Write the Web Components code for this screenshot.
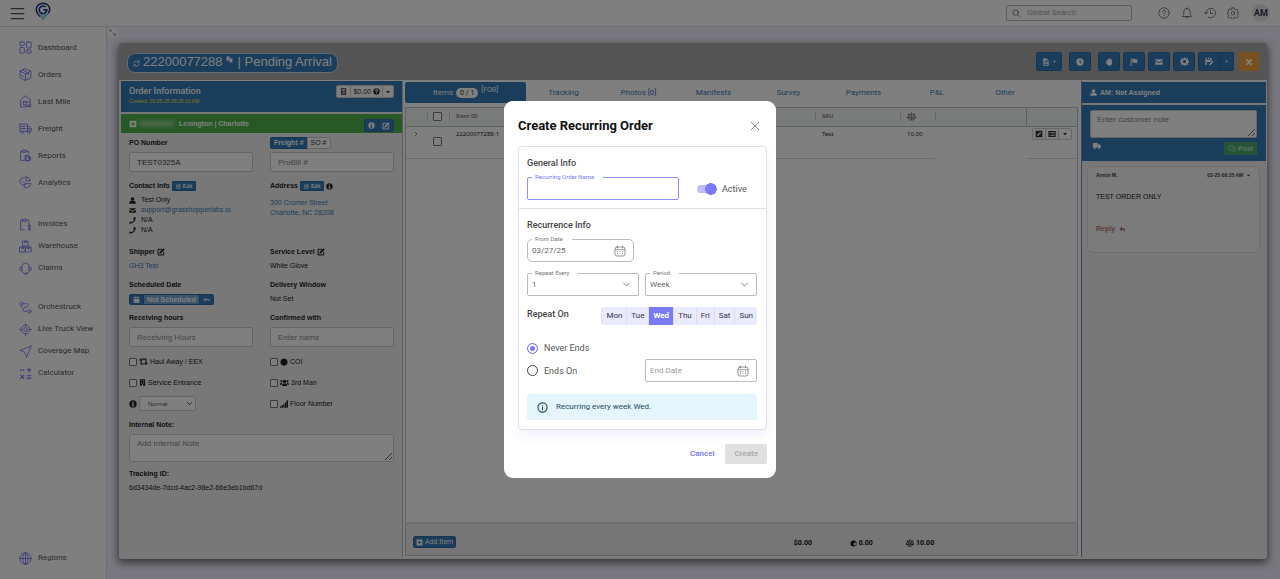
<!DOCTYPE html>
<html lang="en">
<head>
<meta charset="utf-8">
<meta name="viewport" content="width=device-width, initial-scale=1">
<title>Create Recurring Order</title>
<style>
  html, body { height: 100%; margin: 0; }
  body { font: 8px/12px Roboto, "Liberation Sans", sans-serif; color: #333; }
</style>
</head>
<body>
<order-app></order-app>

<script>
const SANS = '"Liberation Sans", Arial, sans-serif';

// Shared rules, every shadow root gets its own copy
const BASE = `
  *, *::before, *::after { box-sizing: border-box; }
  button, input, select, textarea { font: inherit; color: inherit; margin: 0; }
  button { cursor: pointer; }
  a { color: #337ab7; text-decoration: none; }
`;

const BTN = `
  .btn { display: inline-flex; align-items: center; justify-content: center; gap: 2px; padding: 0 3px;
    background: #337ab7; color: #fff; border: 1px solid #2e6da4; border-radius: 2px; line-height: 10px; }
  .btn.light { background: #fff; color: #333; border-color: #ccc; }
  .group { display: inline-flex; }
  .group .btn { border-radius: 0; }
  .group .btn + .btn { border-left-width: 1px; margin-left: -1px; }
  .group .btn:first-child { border-radius: 2px 0 0 2px; }
  .group .btn:last-child { border-radius: 0 2px 2px 0; }
`;

const s = (d, w = 1.5) => `<g fill="none" stroke="currentColor" stroke-width="${w}" stroke-linecap="round" stroke-linejoin="round">${d}</g>`;
const f = (d) => `<g fill="currentColor" fill-rule="evenodd">${d}</g>`;

const ICONS = {
  menu: s('<path d="M2 4h20M2 12h20M2 20h20"/>', 2),
  logo: `<path fill="none" stroke="#1d2f6f" stroke-width="2" d="M8 19.500C5 16 3 13.500 3 10a9 8.500 0 0 1 18 0c0 2-1 3.500-2 5"/>
    <path fill="none" stroke="#1d3f8f" stroke-width="2.200" d="M15.500 6.800A5 5 0 1 0 17 10.500h-4.500"/>
    <path fill="none" stroke="#2bb5c9" stroke-width="1.800" stroke-dasharray="2 1.200" d="M7 17l5 6 7-8M9.500 16.500l2.500 3 4-4"/>`,
  search: s('<circle cx="11" cy="11" r="8"/><path d="M17 17l5 5"/>', 2),
  help: s('<circle cx="12" cy="12" r="10.500"/><path d="M9 9.500c0-4 6-4 6-.500 0 2.500-3 2.500-3 5M12 17.500v.300"/>'),
  bell: s('<path d="M3 19h18l-2.500-4V9.500a6.500 6.500 0 0 0-13 0V15zM9.500 19.500a2.500 2.500 0 0 0 5 0M12 3V1.500"/>'),
  history: s('<path d="M4 13A9.500 9.500 0 1 1 9 20.500M1 11l3 3 3.500-3M13 7v6h4.500"/>'),
  gear: s('<path d="M10 1.500h4l.6 3 2.400 1 2.500-1.700 2.800 2.800-1.700 2.500 1 2.300 1.900.6v2l-2 .6-.9 2.400 1.700 2.500-2.800 2.800-2.500-1.700-2.400 1-.6 2.900h-4l-.6-2.900-2.400-1-2.500 1.700-2.800-2.800 1.700-2.500-1-2.400-1.900-.6v-2l1.900-.6 1-2.300-1.700-2.500 2.800-2.800 2.500 1.700 2.400-1z"/><circle cx="12" cy="12.500" r="3.500"/>'),
  dashboard: s('<rect x="1.500" y="2" width="8.500" height="6.500" rx="2"/><rect x="1.500" y="12" width="8.500" height="10.500" rx="2"/><rect x="14" y="2" width="8.500" height="11" rx="2"/><rect x="14" y="16.500" width="8.500" height="6" rx="2"/>'),
  box: s('<path d="M12 1.500l10 4.500v12l-10 5-10-5V6zM2 6l10 5 10-5M12 11v12M7 3.800l10 5v4M5 14l3 1.500"/>'),
  house: s('<path d="M12 22H3V9l9-7.500L21 9v3M8 12h6v2M8 12v6h4M15 13h5l2 5h-2M13 15v6h3M20 21h2"/><circle cx="18" cy="20" r="2.200"/>'),
  truck: s('<path d="M1.500 4h14v13H9M1.500 4v13h1.500M15.500 8h4l3 4.500V17h-2M15.500 12.500h7M4 8h8M4 12h8"/><circle cx="6" cy="18.500" r="2.500"/><circle cx="18" cy="18.500" r="2.500"/>'),
  report: s('<path d="M9.500 21H3V4h4M13 4h5v5M7 2h6v4H7z"/><path d="M12 12h5l3 3v7h-8z"/><circle cx="17" cy="17" r="4.500"/><path d="M17 15v2h2"/>'),
  analytics: s('<path d="M10 3a7 7 0 1 0 2 13M13 2v7h8a8 8 0 0 0-8-7M12.500 14H22a8 8 0 0 1-13 6l3.500-6L7 10"/>'),
  invoice: s('<path d="M10 22H3V4h4M13 4h5v6M7 2h6v4H7zM22 14c-1.500-1.500-6-1.500-6 1.200 0 2.600 6 1.400 6 4 0 2.800-4.500 2.800-6 1.200M19 11.500v11.500"/>'),
  warehouse: s('<path d="M7 2h10v9H7zM10.500 2v3h3V2M1.500 13h10v9h-10zM5 13v3h3v-3M12.500 13h10v9h-10zM16 13v3h3v-3"/>'),
  claims: s('<path d="M5 9.500a7 7.500 0 0 1 14 0M5 9.500h-2a1.500 1.500 0 0 0-1.500 1.500v4H5zM19 9.500h2a1.500 1.500 0 0 1 1.500 1.500v4H19zM5 15c0 4 3 6 6 6.500M19 15c0 3-1.500 5-4 6"/><circle cx="13" cy="21.500" r="1.500"/>'),
  route: s('<circle cx="4.500" cy="5" r="3"/><circle cx="19.500" cy="19.500" r="3"/><path d="M9 5h5c4 0 4 5 0 6l-4 1c-4 1-4 7 0 7h4M4.500 8v3"/>'),
  target: s('<circle cx="12" cy="12" r="8"/><circle cx="12" cy="12" r="3.500"/><path d="M12 1v3M12 20v3M1 12h3M20 12h3"/>'),
  nav: s('<path d="M22 2L2 10l8.500 3.500L14 22z"/>'),
  calc: s('<path d="M2 5.500h7M15 5.500h7M18.500 2v7M3 15l6 6M9 15l-6 6M15 16h7M15 20.500h7"/>', 2),
  globe: s('<circle cx="12" cy="12" r="10.500"/><ellipse cx="12" cy="12" rx="5" ry="10.500"/><path d="M1.500 12h21M12 1.500v21"/>'),
  expand: s('<path d="M14 14l7 7M16 21h5v-5M10 10L3 3M3 8V3h5"/>', 2),
  refresh: s('<path d="M3 10a9 9 0 0 1 17-2M21 2v6h-6M21 14a9 9 0 0 1-17 2M3 22v-6h6"/>', 2.5),
  copy: f('<path d="M2 2h12v4h-4v10H2zM12 8h10v14H12z"/>'),
  file: f('<path d="M4 1h9v7h7v15H4zM15 1l5 5h-5zM7 12h10v-2H7zm0 4h10v-2H7zm0 4h10v-2H7z"/>'),
  clock: f('<path d="M12 1a11 11 0 1 0 0 22 11 11 0 0 0 0-22zM10.500 5h3v6.500l4 3-2 2.500-5-4z"/>'),
  hand: f('<path d="M5 11V6.500c0-2 3-2 3 0V4c0-2 3-2 3.500 0V2.500c0-2 3-2 3.500 0V4c.5-2 3-2 3 0v2c.5-2 3-1.500 3 .5V15c0 5-3 8-7.500 8-4 0-6-2-8-5L2 13c-1-2.500 1.500-3.500 3-2z"/>'),
  flag: f('<path d="M2 1h3v22H2zM7 3c5-3 8 3 15 0v11c-6 3-9-3-15 0z"/>'),
  mail: f('<path d="M1 4h22v2l-11 7L1 6zM1 9l11 7 11-7v11H1z"/>'),
  cog: f('<path d="M10 1h4l.7 3 2 .8L19.400 3 22 5.500l-1.600 2.700.8 2 2.800.7v3.500l-3 .7-.8 2 1.600 2.700-2.600 2.500-2.600-1.600-2 .8L14 23.500h-4l-.7-3-2-.8-2.700 1.600L2 18.800l1.600-2.700-.8-2-2.800-.7V10l3-.7.800-2L2 5.500 4.600 3l2.700 1.600 2-.8zM12 7.500a4.500 4.500 0 1 0 0 9 4.500 4.500 0 0 0 0-9z"/>'),
  save: f('<path d="M1 2h4v6h8V2h2l3 3v3l-5 5H5v8H1zM8 2h3v4H8zM20 9l3 3-8 9-4 1 1-4z"/>'),
  close: s('<path d="M6 6l12 12M18 6L6 18"/>', 6),
  x: s('<path d="M3 3l18 18M21 3L3 21"/>', 2),
  caret: f('<path d="M4 8h16l-8 9z"/>'),
  calculator: f('<path d="M3 1h18v22H3zM6 4v5h12V4zM6 12v3h3v-3zm4.500 0v3h3v-3zM15 12v8h3v-8zM6 17v3h3v-3zm4.500 0v3h3v-3z"/>'),
  question: f('<path d="M12 1a11 11 0 1 0 0 22 11 11 0 0 0 0-22zM7 9c0-6 10-6 10 0 0 3-3.500 3-3.500 5.500h-3c0-4 3.500-4 3.500-5.500 0-2-4-2-4 .500zM10.500 16.500h3v3h-3z"/>'),
  info: f('<path d="M12 1a11 11 0 1 0 0 22 11 11 0 0 0 0-22zM10 4.500h4v3.500h-4zM9 10h5v7h1.500v2.500h-7V17H10v-4.500H9z"/>'),
  plus: f('<path d="M2 2h20v20H2zM10.500 6v4.500H6v3h4.500V18h3v-4.500H18v-3h-4.500V6z"/>'),
  edit: s('<path d="M13 4H3v17h17v-8"/>', 3) + f('<path d="M19 1l4 4-11 11-5 1 1-5z"/>'),
  user: f('<circle cx="12" cy="7" r="6"/><path d="M1 23v-4c0-4 4-6 11-6s11 2 11 6v4z"/>'),
  phone: f('<path d="M17 1l6 1c0 12-9 21-21 21l-1-6 5-2 2.500 3c4-2 7-5 9-9L14 6z"/>'),
  calendar: f('<path d="M2 4h4V1h3v3h6V1h3v3h4v4H2zM2 10h20v13H2z"/>'),
  key: s('<circle cx="7" cy="12" r="4"/><path d="M11 12h11v4M17 12v3"/>', 2.5),
  retweet: f('<path d="M0 9l5-6 5 6H7v8h7l3 3H4V9zM24 15l-5 6-5-6h3V7h-7L7 4h13v11z"/>'),
  badge: f('<path d="M12 1l3 2 4 0 1 4 3 2-1 3 1 4-3 2-1 4-4 0-3 2-3-2-4 0-1-4-3-2 1-4-1-3 3-2 1-4 4 0z"/>'),
  building: f('<path d="M3 1h18v22h-7v-5h-4v5H3zM7 4v3h3V4zm7 0v3h3V4zM7 9v3h3V9zm7 0v3h3V9zM7 14v2h3v-2zm7 0v2h3v-2z"/>'),
  users: f('<circle cx="12" cy="9" r="4.500"/><circle cx="4" cy="8" r="3"/><circle cx="20" cy="8" r="3"/><path d="M5 21c0-9 14-9 14 0zM0 18c0-5 3-7 6-6l-2 6zM24 18c0-5-3-7-6-6l2 6z"/>'),
  signal: f('<path d="M0 19h4v4H0zM5 16h4v7H5zM10 12h4v11h-4zM15 7h4v16h-4zM20 1h4v22h-4z"/>'),
  chevronRight: s('<path d="M8 4l8 8-8 8"/>', 2),
  chevronDown: s('<path d="M4 8l8 8 8-8"/>', 2.5),
  scale: s('<path d="M12 2v19M6 21h12M3 6h18M1 15l4-9 4 9zM15 15l4-9 4 9zM1 15c1 3 7 3 8 0M15 15c1 3 7 3 8 0"/>', 2),
  cube: f('<path d="M12 1l10 5v12l-10 5-10-5V6zM13 11v9l7-4V8z"/>'),
  pencilBox: f('<path d="M2 2h20v20H2zM16 6l2 2-8 9-4 1 1-4z"/>'),
  list: f('<path d="M1 3h22v18H1zM4 7v2h3V7zm5 0v2h11V7zm-5 4v2h3v-2zm5 0v2h11v-2zm-5 4v2h3v-2zm5 0v2h11v-2z"/>'),
  van: f('<path d="M0 3h14v14H0zM15 7h5l4 5v5h-9z"/><circle cx="6" cy="19" r="2.500"/><circle cx="18" cy="19" r="2.500"/>'),
  chat: s('<path d="M2 3h14v9H8l-4 4v-4H2zM19 8h3v10h-2v3l-4-3h-6"/>', 2),
  reply: f('<path d="M10 2v5c9 0 13 4 10 15-1-6-4-8-10-8v5L1 10.500z"/>'),
  date: s('<rect x="2" y="4" width="20" height="18" rx="4"/><path d="M2 9.500h20M7 2v4M17 2v4"/>', 1.5) +
    s('<path d="M7 13.500h.1M12 13.500h.1M17 13.500h.1M7 17.500h.1M12 17.500h.1M17 17.500h.1"/>', 2),
  infoOutline: s('<circle cx="12" cy="12" r="10"/><path d="M12 11v6M12 7v.2"/>', 2.5)
};

// Square icon, e.g. <ui-icon name="bell" size="12">
class UiIcon extends HTMLElement {
  constructor() {
    super();
    this.attachShadow({ mode: 'open' });
  }

  connectedCallback() {
    const size = this.getAttribute('size') || 8;
    this.shadowRoot.innerHTML = `
      <style>
        :host { display: inline-block; flex: none; width: ${size}px; height: ${size}px; vertical-align: middle; }
        svg { display: block; width: 100%; height: 100%; }
      </style>
      <svg viewBox="0 0 24 24" aria-hidden="true">${ICONS[this.getAttribute('name')] || ''}</svg>
    `;
  }
}
customElements.define('ui-icon', UiIcon);

class AppTopbar extends HTMLElement {
  constructor() {
    super();
    this.attachShadow({ mode: 'open' });
    this.shadowRoot.innerHTML = `
      <style>
        ${BASE}
        :host { display: flex; align-items: center; height: 27px; padding: 0 10px; background: #fff;
          border-bottom: 1px solid #dcdae6; color: #555; }
        button { display: flex; padding: 0; border: 0; background: none; }
        .logo { display: flex; margin: -5px auto 0 9px; }
        .search { display: flex; align-items: center; gap: 7px; width: 126px; height: 16px; padding: 0 5px;
          border: 1px solid #b9b9b9; border-radius: 2px; }
        .search input { flex: 1; min-width: 0; height: 12px; padding: 0; border: 0; outline: 0; background: none; }
        .search input::placeholder { color: #aaa; }
        .actions { display: flex; align-items: center; gap: 11px; margin: 0 13px 0 26px; }
        .avatar { width: 18px; height: 18px; align-items: center; justify-content: center; border-radius: 50%;
          background: #e7e7ec; color: #222240; font-size: 9px; font-weight: 500; }
      </style>
      <button aria-label="Menu"><ui-icon name="menu" size="15"></ui-icon></button>
      <a class="logo" href="#" aria-label="Home"><ui-icon name="logo" size="18"></ui-icon></a>
      <label class="search">
        <ui-icon name="search" size="8"></ui-icon>
        <input type="text" placeholder="Global Search" aria-label="Global Search">
      </label>
      <div class="actions">
        <button aria-label="Help"><ui-icon name="help" size="12"></ui-icon></button>
        <button aria-label="Notifications"><ui-icon name="bell" size="12"></ui-icon></button>
        <button aria-label="History"><ui-icon name="history" size="12"></ui-icon></button>
        <button aria-label="Settings"><ui-icon name="gear" size="12"></ui-icon></button>
      </div>
      <button class="avatar">AM</button>
    `;
  }
}
customElements.define('app-topbar', AppTopbar);

class NavItem extends HTMLElement {
  constructor() {
    super();
    this.attachShadow({ mode: 'open' });
  }

  connectedCallback() {
    this.shadowRoot.innerHTML = `
      <style>
        ${BASE}
        :host { display: block; }
        a { display: flex; align-items: center; gap: 6px; height: 100%; color: #555; }
        ui-icon { color: #6d6af0; }
      </style>
      <a href="#"><ui-icon name="${this.getAttribute('icon')}" size="13"></ui-icon><slot></slot></a>
    `;
  }
}
customElements.define('nav-item', NavItem);

class SideNav extends HTMLElement {
  constructor() {
    super();
    this.attachShadow({ mode: 'open' });
    this.shadowRoot.innerHTML = `
      <style>
        ${BASE}
        :host { display: block; background: #fff; border-right: 1px solid #dcdae6; }
        nav { display: flex; flex-direction: column; gap: 17px; height: 100%; padding: 7px 8px 10px 19px; }
        .main nav-item { height: 27px; }
        .sub nav-item { height: 22px; }
        .last { margin-top: auto; }
      </style>
      <nav>
        <div class="main">
          <nav-item icon="dashboard">Dashboard</nav-item>
          <nav-item icon="box">Orders</nav-item>
          <nav-item icon="house">Last Mile</nav-item>
          <nav-item icon="truck">Freight</nav-item>
          <nav-item icon="report">Reports</nav-item>
          <nav-item icon="analytics">Analytics</nav-item>
        </div>
        <div class="sub">
          <nav-item icon="invoice">Invoices</nav-item>
          <nav-item icon="warehouse">Warehouse</nav-item>
          <nav-item icon="claims">Claims</nav-item>
        </div>
        <div class="sub">
          <nav-item icon="route">Orchestruck</nav-item>
          <nav-item icon="target">Live Truck View</nav-item>
          <nav-item icon="nav">Coverage Map</nav-item>
          <nav-item icon="calc">Calculator</nav-item>
        </div>
        <div class="sub last">
          <nav-item icon="globe">Regions</nav-item>
        </div>
      </nav>
    `;
  }
}
customElements.define('side-nav', SideNav);

class OrderHeader extends HTMLElement {
  constructor() {
    super();
    this.attachShadow({ mode: 'open' });
    this.shadowRoot.innerHTML = `
      <style>
        ${BASE}
        ${BTN}
        :host { display: flex; align-items: center; justify-content: space-between; height: 37px;
          padding: 0 8px; background: #aaa; border-radius: 3px 3px 0 0; }
        h1 { display: flex; align-items: center; gap: 3px; height: 20px; margin: 3px 0 0; padding: 0 5px;
          border: 1px solid #c4d8ee; border-radius: 8px; background: #337ab7; color: #fff;
          font: 400 13px/16px ${SANS}; }
        h1 span { align-self: flex-start; }
        .copy { align-self: flex-start; margin: 2px 2px 0 0; }
        .tools { display: flex; gap: 3px; }
        .tools .btn { min-width: 22px; height: 19px; }
        .tools .gap { margin-right: 4px; }
        .tools .group { margin-right: 2px; }
        .tools .menu { min-width: 26px; }
        .group .btn:last-child { min-width: 15px; }
        .tools .warn { min-width: 20px; background: #f0a33c; border-color: #eea236; }
      </style>
      <h1>
        <ui-icon name="refresh" size="7"></ui-icon>
        <span>22200077288</span>
        <ui-icon class="copy" name="copy" size="7"></ui-icon>
        <span>| Pending Arrival</span>
      </h1>
      <div class="tools">
        <button class="btn menu gap" aria-label="Documents"><ui-icon name="file" size="8"></ui-icon><ui-icon name="caret" size="5"></ui-icon></button>
        <button class="btn gap" aria-label="Timeline"><ui-icon name="clock"></ui-icon></button>
        <button class="btn" aria-label="Hold"><ui-icon name="hand"></ui-icon></button>
        <button class="btn" aria-label="Flag"><ui-icon name="flag"></ui-icon></button>
        <button class="btn" aria-label="Mail"><ui-icon name="mail"></ui-icon></button>
        <button class="btn" aria-label="Settings"><ui-icon name="cog" size="9"></ui-icon></button>
        <div class="group">
          <button class="btn" aria-label="Save"><ui-icon name="save" size="9"></ui-icon></button>
          <button class="btn" aria-label="More save options"><ui-icon name="caret" size="5"></ui-icon></button>
        </div>
        <button class="btn warn" aria-label="Close"><ui-icon name="close"></ui-icon></button>
      </div>
    `;
  }
}
customElements.define('order-header', OrderHeader);

class OrderInfo extends HTMLElement {
  constructor() {
    super();
    this.attachShadow({ mode: 'open' });
    this.shadowRoot.innerHTML = `
      <style>
        ${BASE}
        ${BTN}
        :host { display: block; background: #f1f1f1; color: #222; font: 7px/10px ${SANS}; }
        header { display: flex; justify-content: space-between; padding: 4px 8px; height: 31px;
          background: #337ab7; color: #fff; }
        h2 { margin: 0; font: 500 9px/12px Roboto, sans-serif; }
        .created { color: #f4ec3c; font-size: 5px; line-height: 9px; }
        header .btn { height: 13px; }
        header .btn + .btn { padding: 0 2px; }
        .route { display: flex; align-items: center; gap: 2px; height: 21px; padding: 0 8px;
          border-top: 2px solid #f1f1f1; background: #4db34d; color: #fff; font-weight: 700; }
        .blur { width: 35px; height: 5px; margin-right: 3px; background: #a5d8a5; filter: blur(2px); }
        .route .group { margin-left: auto; padding-top: 4px; }
        .route .btn { height: 13px; min-width: 14px; }
        .body { padding: 4px 8px; }
        .row { display: grid; grid-template-columns: 1fr 1fr; column-gap: 17px; margin-bottom: 8px; }
        .row.tight { margin-bottom: 6px; }
        .row.snug { margin-bottom: 4px; }
        .row.wide { margin-bottom: 11px; }
        .head { display: flex; align-items: center; gap: 2px; height: 12px; margin-bottom: 3px; font-weight: 700; }
        .head .btn { height: 10px; font-size: 5px; font-weight: 700; line-height: 8px; border-radius: 1px; }
        .head .group .btn { height: 12px; font-size: 7px; }
        .head .btn.light { font-weight: 400; }
        .text { display: block; width: 100%; height: 20px; padding: 0 7px; border: 1px solid #ccc;
          border-radius: 2px; background: #fff; color: #444; font-size: 8px; }
        textarea.text { height: 28px; margin-bottom: 6px; padding: 4px 7px; resize: vertical; }
        ::placeholder { color: #888; }
        ul { margin: 0; padding: 0; list-style: none; }
        li { display: flex; align-items: center; gap: 5px; height: 10px; }
        address { padding-top: 3px; font-style: normal; line-height: 10px; }
        .date .btn { height: 11px; font-weight: 700; border-color: #2e6da4; }
        .date .muted { background: #76a8d4; }
        .checks { display: grid; grid-template-columns: 1fr 1fr; column-gap: 17px; margin-bottom: 5px; }
        .checks > * { display: flex; align-items: center; gap: 2px; height: 21px; }
        input[type=checkbox] { appearance: none; width: 8px; height: 8px; border: 1px solid #777; border-radius: 1px; background: #fff; }
        .pick { position: relative; display: flex; align-items: center; }
        select { appearance: none; width: 57px; height: 15px; padding: 0 8px; border: 1px solid #ccc;
          border-radius: 2px; background: #fff; color: #555; font-size: 6px; }
        .pick ui-icon { position: absolute; right: 3px; pointer-events: none; }
      </style>
      <header>
        <div>
          <h2>Order Information</h2>
          <div class="created">Created: 03-25-25 09:25:16 AM</div>
        </div>
        <div class="group">
          <button class="btn light" aria-label="Calculate"><ui-icon name="calculator" size="7"></ui-icon></button>
          <button class="btn light">$0.00 <ui-icon name="question" size="7"></ui-icon></button>
          <button class="btn light" aria-label="More"><ui-icon name="caret" size="6"></ui-icon></button>
        </div>
      </header>
      <div class="route">
        <ui-icon name="plus" size="8"></ui-icon>
        <span class="blur"></span>
        <span>Lexington | Charlotte</span>
        <div class="group">
          <button class="btn" aria-label="Details"><ui-icon name="info" size="7"></ui-icon></button>
          <button class="btn" aria-label="Edit"><ui-icon name="edit" size="8"></ui-icon></button>
        </div>
      </div>
      <div class="body">
        <div class="row">
          <div>
            <label class="head" for="po">PO Number</label>
            <input class="text" id="po" type="text" value="TEST0325A">
          </div>
          <div>
            <div class="head"><div class="group"><button class="btn">Freight #</button><button class="btn light">SO #</button></div></div>
            <input class="text" type="text" placeholder="ProBill #" aria-label="ProBill #">
          </div>
        </div>
        <div class="row wide">
          <div>
            <div class="head">Contact Info <button class="btn"><ui-icon name="edit" size="5"></ui-icon>Edit</button></div>
            <ul>
              <li><ui-icon name="user" size="7"></ui-icon>Test Only</li>
              <li><ui-icon name="mail" size="7"></ui-icon><a href="#">support@grasshopperlabs.io</a></li>
              <li><ui-icon name="phone" size="7"></ui-icon>N/A</li>
              <li><ui-icon name="phone" size="7"></ui-icon>N/A</li>
            </ul>
          </div>
          <div>
            <div class="head">Address <button class="btn"><ui-icon name="edit" size="5"></ui-icon>Edit</button> <ui-icon name="info" size="7"></ui-icon></div>
            <address><a href="#">300 Cromer Street<br>Charlotte, NC 28208</a></address>
          </div>
        </div>
        <div class="row">
          <div>
            <div class="head">Shipper <ui-icon name="edit" size="8"></ui-icon></div>
            <a href="#">GH3 Test</a>
          </div>
          <div>
            <div class="head">Service Level <ui-icon name="edit" size="8"></ui-icon></div>
            White Glove
          </div>
        </div>
        <div class="row tight">
          <div>
            <div class="head">Scheduled Date</div>
            <div class="group date">
              <button class="btn" aria-label="Calendar"><ui-icon name="calendar" size="7"></ui-icon></button>
              <button class="btn muted">Not Scheduled</button>
              <button class="btn" aria-label="Key"><ui-icon name="key" size="7"></ui-icon></button>
            </div>
          </div>
          <div>
            <div class="head">Delivery Window</div>
            Not Set
          </div>
        </div>
        <div class="row snug">
          <div>
            <label class="head" for="hours">Receiving hours</label>
            <input class="text" id="hours" type="text" placeholder="Receiving Hours">
          </div>
          <div>
            <label class="head" for="with">Confirmed with</label>
            <input class="text" id="with" type="text" placeholder="Enter name">
          </div>
        </div>
        <div class="checks">
          <label><input type="checkbox"><ui-icon name="retweet" size="9"></ui-icon>Haul Away / EEX</label>
          <label><input type="checkbox"><ui-icon name="badge"></ui-icon>COI</label>
          <label><input type="checkbox"><ui-icon name="building" size="7"></ui-icon>Service Entrance</label>
          <label><input type="checkbox"><ui-icon name="users" size="9"></ui-icon>3rd Man</label>
          <div>
            <ui-icon name="info"></ui-icon>
            <div class="pick">
              <select aria-label="Priority"><option>Normal</option></select>
              <ui-icon name="chevronDown" size="7"></ui-icon>
            </div>
          </div>
          <label><input type="checkbox"><ui-icon name="signal"></ui-icon>Floor Number</label>
        </div>
        <label class="head" for="note">Internal Note:</label>
        <textarea class="text" id="note" placeholder="Add Internal Note"></textarea>
        <div class="head">Tracking ID:</div>
        6d3434de-7dcd-4ac2-98e2-66e3eb1bd67d
      </div>
    `;
  }
}
customElements.define('order-info', OrderInfo);

class OrderItems extends HTMLElement {
  constructor() {
    super();
    this.attachShadow({ mode: 'open' });
    this.shadowRoot.innerHTML = `
      <style>
        ${BASE}
        ${BTN}
        :host { display: flex; flex-direction: column; min-width: 0; padding: 1px 3px 1px 2px; background: #fff; }
        nav { display: grid; grid-template-columns: 121fr repeat(5, 75fr) 72fr 64fr 41fr; margin-bottom: 4px; }
        nav a { display: flex; align-items: center; justify-content: center; height: 21px; }
        nav a.active { gap: 3px; border-radius: 2px; background: #337ab7; color: #fff; }
        .count { padding: 0 4px; border-radius: 6px; background: #fff; color: #333; font-size: 7px; line-height: 10px; }
        sup { align-self: flex-start; font-size: 7px; line-height: 16px; }
        .grid { flex: 1; border: 1px solid #bdc3c7; border-bottom: 0; }
        table { width: 100%; border-collapse: collapse; table-layout: fixed; font: 6px/9px "Noto Sans", sans-serif; color: #222; }
        th { height: 18px; padding: 0 7px; background: #f5f7f7; border-bottom: 1px solid #bdc3c7;
          color: #666; font-weight: 500; text-align: left; white-space: nowrap; }
        th.sep { background: linear-gradient(#d0d3d5, #d0d3d5) left center / 1px 9px no-repeat #f5f7f7; }
        th.last { border-left: 1px solid #bdc3c7; }
        td { height: 32px; padding: 3px 7px; vertical-align: top; border-bottom: 1px solid #d9dcde; }
        td.blank { border-bottom: 0; }
        td.tick { padding-top: 10px; }
        .tick { padding: 0 6px; }
        input { appearance: none; display: block; width: 9px; height: 9px; border: 1px solid #777; border-radius: 1px; background: #fff; }
        td .btn { height: 12px; padding: 0 2px; }
        td .btn:last-child { padding: 0 3px; }
        td:last-child { padding: 1px 6px; }
        footer { display: grid; grid-template-columns: 386fr 57fr 57fr 173fr; align-items: center; height: 34px; padding: 7px 0 0 7px;
          background: #ececec; border: 1px solid #bdc3c7; border-top: 2px solid #d9dcde; font-weight: 700; font-size: 7px; color: #111; }
        footer .btn { height: 12px; font-weight: 400; padding: 0 2px; }
      </style>
      <nav>
        <a class="active" href="#">Items <span class="count">0 / 1</span><sup>[FOB]</sup></a>
        <a href="#">Tracking</a>
        <a href="#">Photos [0]</a>
        <a href="#">Manifests</a>
        <a href="#">Survey</a>
        <a href="#">Payments</a>
        <a href="#">P&amp;L</a>
        <a href="#">Other</a>
      </nav>
      <div class="grid">
        <table>
          <colgroup>
            <col style="width: 21px"><col style="width: 22px"><col>
            <col style="width: 85px"><col style="width: 35px"><col style="width: 91px"><col style="width: 51px">
          </colgroup>
          <thead>
            <tr>
              <th></th>
              <th class="sep tick"><input type="checkbox" aria-label="Select all"></th>
              <th class="sep">Item ID</th>
              <th class="sep">SKU</th>
              <th class="sep"><ui-icon name="scale" size="9"></ui-icon></th>
              <th class="sep"></th>
              <th class="last"></th>
            </tr>
          </thead>
          <tbody>
            <tr>
              <td><ui-icon name="chevronRight" size="6"></ui-icon></td>
              <td class="tick"><input type="checkbox" aria-label="Select item"></td>
              <td>22200077288-1</td>
              <td>Test</td>
              <td>10.00</td>
              <td class="blank"></td>
              <td>
                <div class="group">
                  <button class="btn light" aria-label="Edit"><ui-icon name="pencilBox"></ui-icon></button>
                  <button class="btn light" aria-label="Details"><ui-icon name="list"></ui-icon></button>
                  <button class="btn light" aria-label="More"><ui-icon name="caret" size="6"></ui-icon></button>
                </div>
              </td>
            </tr>
          </tbody>
        </table>
      </div>
      <footer>
        <div><button class="btn"><ui-icon name="plus" size="7"></ui-icon>Add Item</button></div>
        <span>$0.00</span>
        <span><ui-icon name="cube" size="7"></ui-icon> 0.00</span>
        <span><ui-icon name="scale" size="8"></ui-icon> 10.00</span>
      </footer>
    `;
  }
}
customElements.define('order-items', OrderItems);

class OrderNotes extends HTMLElement {
  constructor() {
    super();
    this.attachShadow({ mode: 'open' });
    this.shadowRoot.innerHTML = `
      <style>
        ${BASE}
        ${BTN}
        :host { display: block; padding-top: 1px; background: #f1f1f1; font: 7px/10px ${SANS}; }
        h2 { display: flex; align-items: center; gap: 3px; height: 21px; margin: 0 0 2px; padding: 0 8px;
          background: #337ab7; color: #fff; font-size: 7px; }
        form { padding: 5px 9px 6px 8px; background: #337ab7; }
        textarea { display: block; width: 100%; height: 28px; padding: 4px 6px; border: 1px solid #ccc;
          border-radius: 2px; background: #fff; font-size: 8px; resize: vertical; }
        ::placeholder { color: #888; }
        .bar { display: flex; justify-content: space-between; align-items: flex-start; padding: 4px 0 0 3px; color: #fff; }
        .post { height: 13px; background: #4aa96c; border-color: #4aa96c; color: #b8e0c6; font-weight: 700; border-radius: 0; }
        article { margin: 5px 6px 0 5px; height: 87px; padding: 3px 8px; border: 1px solid #ddd; border-radius: 5px; background: #f6f6f6; }
        .meta { display: flex; justify-content: space-between; color: #444; font-size: 5px; font-weight: 700; }
        p { margin: 12px 0 22px; font-size: 7px; color: #222; }
        article a { color: #b77c75; font-weight: 700; }
      </style>
      <h2><ui-icon name="user" size="7"></ui-icon>AM: Not Assigned</h2>
      <form>
        <textarea placeholder="Enter customer note" aria-label="Customer note"></textarea>
        <div class="bar">
          <ui-icon name="van"></ui-icon>
          <button class="btn post" type="button"><ui-icon name="chat"></ui-icon>Post</button>
        </div>
      </form>
      <article>
        <div class="meta"><span>Armin M.</span><span>03-25 09:25 AM &nbsp;<ui-icon name="caret" size="5"></ui-icon></span></div>
        <p>TEST ORDER ONLY</p>
        <a href="#">Reply &nbsp;<ui-icon name="reply" size="7"></ui-icon></a>
      </article>
    `;
  }
}
customElements.define('order-notes', OrderNotes);

// Outlined control: type="text | date | select", a label in the border when floating
class OutlinedField extends HTMLElement {
  constructor() {
    super();
    this.attachShadow({ mode: 'open' });
  }

  connectedCallback() {
    const label = this.getAttribute('label') || '';
    const value = this.getAttribute('value') || '';
    const type = this.getAttribute('type') || 'text';
    const floating = !this.hasAttribute('resting');
    const control = type === 'select'
      ? `<select id="control"><option>${value}</option></select>`
      : `<input id="control" type="text" value="${value}" ${floating ? '' : `placeholder="${label}" aria-label="${label}"`}>`;
    const icon = { select: 'chevronDown', date: 'date' }[type];

    this.shadowRoot.innerHTML = `
      <style>
        ${BASE}
        :host { display: block; --line: #bbb; --ink: #777; }
        :host([focused]) { --line: #8f8ffc; --ink: #7b7bfa; }
        .box { position: relative; display: flex; align-items: center; height: 23px; padding: 0 7px 0 4px;
          border: 1px solid var(--line); border-radius: 2px; }
        :host([round]) .box { border-radius: 5px; }
        label { position: absolute; top: -6px; left: 4px; padding: 0 9px 0 3px; background: #fff;
          color: var(--ink); font-size: 6px; line-height: 10px; white-space: nowrap; }
        input, select { appearance: none; flex: 1; min-width: 0; width: 100%; height: 18px; padding: 0; border: 0; outline: 0;
          background: none; color: #666; font-size: 8px; }
        input::placeholder { color: #999; }
        ui-icon { color: #777; pointer-events: none; }
      </style>
      <div class="box">
        ${control}
        ${floating ? `<label for="control">${label}</label>` : ''}
        ${icon ? `<ui-icon name="${icon}" size="${icon === 'date' ? 12 : 9}"></ui-icon>` : ''}
      </div>
    `;
  }
}
customElements.define('outlined-field', OutlinedField);

class DayPicker extends HTMLElement {
  constructor() {
    super();
    this.attachShadow({ mode: 'open' });
  }

  connectedCallback() {
    const selected = this.getAttribute('value');
    const days = ['Mon', 'Tue', 'Wed', 'Thu', 'Fri', 'Sat', 'Sun'];
    this.shadowRoot.innerHTML = `
      <style>
        ${BASE}
        :host { display: flex; overflow: hidden; border-radius: 3px; background: #eaeafd; }
        button { flex: auto; height: 18px; padding: 0 4px; border: 0; border-left: 1px solid #dcdcf4;
          background: none; color: #33334d; font-size: 8px; }
        button:first-child { border-left: 0; }
        button[aria-pressed=true] { background: #7b7bfa; color: #fff; font-weight: 700; }
      </style>
      ${days.map((day) => `<button aria-pressed="${day === selected}">${day}</button>`).join('')}
    `;
    this.shadowRoot.querySelectorAll('button').forEach((button) => {
      button.addEventListener('click', () => {
        button.setAttribute('aria-pressed', button.getAttribute('aria-pressed') !== 'true');
      });
    });
  }
}
customElements.define('day-picker', DayPicker);

class RecurringDialog extends HTMLElement {
  constructor() {
    super();
    this.attachShadow({ mode: 'open' });
    this.shadowRoot.innerHTML = `
      <style>
        ${BASE}
        :host { position: fixed; inset: 0; display: flex; align-items: center; justify-content: center; background: rgba(0, 0, 0, .5); }
        .dialog { width: 272px; padding: 13px 9px 14px 14px; border-radius: 9px; background: #fff;
          font-size: 9px; line-height: 12px; color: #555; }
        header { display: flex; align-items: center; justify-content: space-between; padding-right: 7px; margin-bottom: 9px; }
        h2 { margin: 0; color: #111; font-size: 13px; line-height: 23px; font-weight: 700; }
        header button { display: flex; padding: 0; border: 0; background: none; color: #666; }
        .card { border: 1px solid #dfdfe6; border-radius: 4px; box-shadow: 0 6px 10px rgba(120, 120, 250, .1); }
        section { padding: 10px 9px 9px 8px; }
        section:first-child { padding-bottom: 8px; }
        section + section { border-top: 1px solid #dfdfe6; }
        h3 { margin: 0 0 8px; color: #444; font-size: 9px; line-height: 12px; font-weight: 500; }
        .line { display: flex; align-items: center; justify-content: space-between; }
        .name { display: grid; grid-template-columns: 152fr 60fr; column-gap: 18px; align-items: center; }
        .half { display: grid; grid-template-columns: repeat(2, minmax(0, 1fr)); column-gap: 6px; align-items: center; }
        .switch { display: flex; align-items: center; gap: 5px; }
        .switch input { appearance: none; width: 20px; height: 12px; margin: 0;
          background: radial-gradient(circle at 14px 6px, #7b7bfa 6px, transparent 6px),
            linear-gradient(#bdbdfd, #bdbdfd) 0 center / 15px 8px no-repeat; border-radius: 6px; }
        .from { width: 107px; margin-bottom: 11px; }
        .days { margin: 11px 0 12px; align-items: flex-start; }
        .days strong { color: #444; font-weight: 500; line-height: 14px; }
        .radio { display: flex; align-items: center; gap: 6px; height: 22px; }
        .radio input { appearance: none; width: 11px; height: 11px; margin: 0; border: 1px solid #444; border-radius: 50%; }
        .radio input:checked { border-color: #7b7bfa; background: #7b7bfa; box-shadow: inset 0 0 0 2px #fff; }
        .alert { display: flex; align-items: center; gap: 8px; height: 26px; margin-top: 12px; padding: 0 10px;
          border-radius: 2px; background: #e4f5fd; color: #1d4a63; font-size: 8px; }
        footer { display: flex; justify-content: flex-end; align-items: center; gap: 11px; margin-top: 14px; }
        footer button { height: 20px; padding: 0; border: 0; background: none; color: #7070fa; font-size: 8px; font-weight: 500; }
        footer .create { padding: 0 9px; border-radius: 2px; background: #e0e0e0; color: #a6a6a6; }
      </style>
      <div class="dialog" role="dialog" aria-modal="true" aria-labelledby="title">
        <header>
          <h2 id="title">Create Recurring Order</h2>
          <button aria-label="Close"><ui-icon name="x" size="10"></ui-icon></button>
        </header>
        <div class="card">
          <section>
            <h3>General Info</h3>
            <div class="name">
              <outlined-field label="Recurring Order Name" focused></outlined-field>
              <label class="switch"><input type="checkbox" role="switch" checked>Active</label>
            </div>
          </section>
          <section>
            <h3>Recurrence Info</h3>
            <outlined-field class="from" type="date" label="From Date" value="03/27/25" round></outlined-field>
            <div class="half">
              <outlined-field type="select" label="Repeat Every" value="1"></outlined-field>
              <outlined-field type="select" label="Period" value="Week"></outlined-field>
            </div>
            <div class="line days">
              <strong>Repeat On</strong>
              <day-picker value="Wed"></day-picker>
            </div>
            <label class="radio"><input type="radio" name="ends" checked>Never Ends</label>
            <div class="half">
              <label class="radio"><input type="radio" name="ends">Ends On</label>
              <outlined-field type="date" label="End Date" resting></outlined-field>
            </div>
            <div class="alert"><ui-icon name="infoOutline" size="11"></ui-icon>Recurring every week Wed.</div>
          </section>
        </div>
        <footer>
          <button>Cancel</button>
          <button class="create" disabled>Create</button>
        </footer>
      </div>
    `;
  }
}
customElements.define('recurring-dialog', RecurringDialog);

class OrderApp extends HTMLElement {
  constructor() {
    super();
    this.attachShadow({ mode: 'open' });
    this.shadowRoot.innerHTML = `
      <style>
        ${BASE}
        :host { display: grid; grid-template: auto 1fr / 107px 1fr; min-height: 100%; }
        app-topbar { grid-column: 1 / -1; }
        main { position: relative; display: flex; min-width: 0; padding: 16px 13px 20px 12px; background: #f3f1fd; }
        .expand { position: absolute; top: 0; left: 0; display: flex; padding: 2px; border: 0; border-radius: 50%; background: #fff; color: #777; }
        .window { flex: 1; display: flex; flex-direction: column; min-width: 0; border-radius: 3px;
          background: #f1f1f1; box-shadow: 0 3px 8px 1px rgba(0, 0, 0, .55); }
        .columns { flex: 1; display: grid; grid-template-columns: 281px 1fr 185px; min-height: 0; margin: 0 1px 2px 2px;
          border-top: 1px solid #fff; }
        order-items { border-left: 1px solid #bbb; }
        order-notes { border-left: 1px solid #6f8fc0; }
      </style>
      <app-topbar></app-topbar>
      <side-nav></side-nav>
      <main>
        <button class="expand" aria-label="Expand"><ui-icon name="expand" size="7"></ui-icon></button>
        <div class="window">
          <order-header></order-header>
          <div class="columns">
            <order-info></order-info>
            <order-items></order-items>
            <order-notes></order-notes>
          </div>
        </div>
      </main>
      <recurring-dialog></recurring-dialog>
    `;
  }
}
customElements.define('order-app', OrderApp);
</script>
</body>
</html>
